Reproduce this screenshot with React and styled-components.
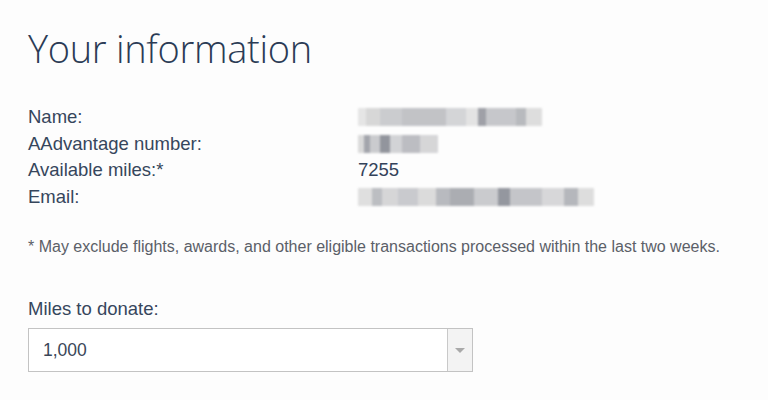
import React from 'react';
import styled, { createGlobalStyle } from 'styled-components';

const GlobalStyle = createGlobalStyle`
  body {
    margin: 0;
    background: #fdfdfd;
    font-family: "Liberation Sans", Arial, sans-serif;
    color: #36465c;
  }
`;

const rows = [
  { label: 'Name:', blocks: [[8, '#e4e4e4'], [14, '#d6d6d6'], [22, '#c9cacd'], [44, '#bfc0c4'], [20, '#d2d3d6'], [12, '#e2e2e2'], [8, '#9a9ca3'], [30, '#c4c5c9'], [10, '#b5b7bb'], [16, '#dcdcdc']] },
  { label: 'AAdvantage number:', blocks: [[6, '#d8d8d8'], [6, '#9fa1a8'], [10, '#c8c9cc'], [10, '#8d9098'], [12, '#d0d1d4'], [18, '#b9babf'], [18, '#d4d4d6']] },
  { label: 'Available miles:*', value: '7255' },
  { label: 'Email:', blocks: [[14, '#dedede'], [10, '#b9bbbf'], [16, '#d4d4d6'], [20, '#c7c8cc'], [18, '#dadada'], [14, '#b5b7bc'], [24, '#a7a9af'], [24, '#c8c9cc'], [12, '#8f929a'], [32, '#c2c3c7'], [22, '#d6d6d8'], [14, '#b2b4b9'], [16, '#dcdcdc']] },
];

export default function App() {
  return (
    <Page>
      <GlobalStyle />
      <Title>Your information</Title>
      <InfoList>
        {rows.map(row => (
          <Row key={row.label}>
            <Label>{row.label}</Label>
            {row.value ? (
              <Value>{row.value}</Value>
            ) : (
              <Blurred>
                {row.blocks.map(([w, c], i) => (
                  <Pixel key={i} style={{ width: w, background: c }} />
                ))}
              </Blurred>
            )}
          </Row>
        ))}
      </InfoList>
      <Note>* May exclude flights, awards, and other eligible transactions processed within the last two weeks.</Note>
      <FieldLabel>Miles to donate:</FieldLabel>
      <Select>
        <SelectValue>1,000</SelectValue>
        <ArrowBox>
          <Arrow />
        </ArrowBox>
      </Select>
    </Page>
  );
}

const Page = styled.div`
  padding: 22px 28px 0;
  width: 768px;
  height: 400px;
  box-sizing: border-box;
`;

const Title = styled.h1`
  margin: 0;
  font-family: "Open Sans", sans-serif;
  font-weight: 300;
  font-size: 38px;
  line-height: 52px;
  color: #2b3b55;
  letter-spacing: -0.3px;
`;

const InfoList = styled.div`
  margin-top: 30px;
  display: flex;
  flex-direction: column;
`;

const Row = styled.div`
  display: flex;
  align-items: center;
  height: 26.5px;
  font-size: 18.5px;
`;

const Label = styled.div`
  width: 330px;
`;

const Value = styled.div`
  font-size: 18.5px;
  color: #33425a;
`;

const Blurred = styled.div`
  display: flex;
  height: 18px;
  filter: blur(1px);
  opacity: 0.95;
`;

const Pixel = styled.span`
  display: block;
  height: 100%;
`;

const Note = styled.p`
  margin: 28px 0 0;
  font-size: 16px;
  line-height: 18px;
  color: #5b6068;
  letter-spacing: 0;
`;

const FieldLabel = styled.div`
  margin-top: 42px;
  font-size: 18.5px;
  line-height: 21px;
`;

const Select = styled.div`
  margin-top: 9px;
  width: 445px;
  height: 44px;
  box-sizing: border-box;
  border: 1px solid #c3c3c3;
  background: #fff;
  display: flex;
`;

const SelectValue = styled.div`
  flex: 1;
  display: flex;
  align-items: center;
  padding-left: 14px;
  font-size: 17.5px;
  color: #3a4658;
`;

const ArrowBox = styled.div`
  width: 24px;
  border-left: 1px solid #c9c9c9;
  background: #f3f3f3;
  display: flex;
  align-items: center;
  justify-content: center;
`;

const Arrow = styled.span`
  width: 0;
  height: 0;
  border-left: 5px solid transparent;
  border-right: 5px solid transparent;
  border-top: 5px solid #a9a9a9;
`;
